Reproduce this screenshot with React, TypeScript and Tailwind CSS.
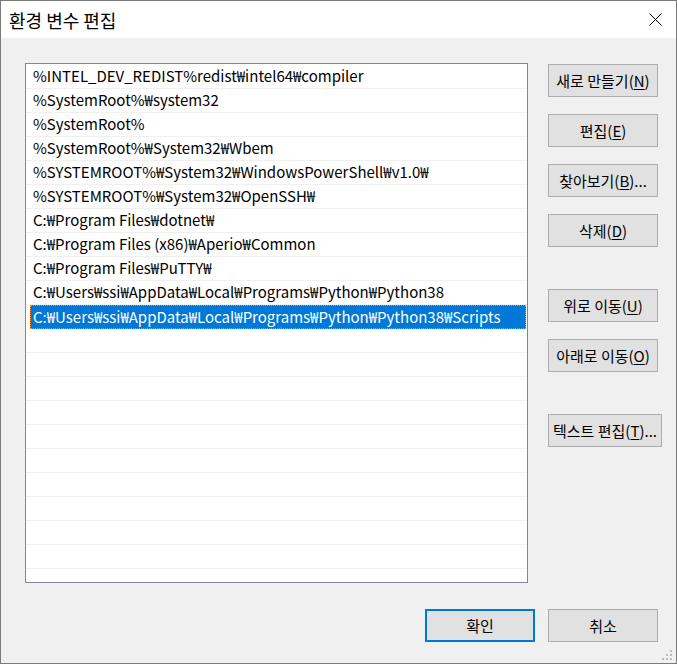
const paths = [
  "%INTEL_DEV_REDIST%redist₩intel64₩compiler",
  "%SystemRoot%₩system32",
  "%SystemRoot%",
  "%SystemRoot%₩System32₩Wbem",
  "%SYSTEMROOT%₩System32₩WindowsPowerShell₩v1.0₩",
  "%SYSTEMROOT%₩System32₩OpenSSH₩",
  "C:₩Program Files₩dotnet₩",
  "C:₩Program Files (x86)₩Aperio₩Common",
  "C:₩Program Files₩PuTTY₩",
  "C:₩Users₩ssi₩AppData₩Local₩Programs₩Python₩Python38",
  "C:₩Users₩ssi₩AppData₩Local₩Programs₩Python₩Python38₩Scripts",
];

const SELECTED = 10;

function WinButton({
  label,
  hotkey,
  suffix = "",
  wide = false,
  className = "",
}: {
  label: string;
  hotkey: string;
  suffix?: string;
  wide?: boolean;
  className?: string;
}) {
  return (
    <button
      className={`h-[33px] shrink-0 ${wide ? "w-[114px]" : "w-[110px]"} border border-[#adadad] bg-[#e1e1e1] text-[15px] leading-none text-black flex items-center justify-center ${className}`}
    >
      <span>
        {label}(<u className="underline-offset-2">{hotkey}</u>){suffix}
      </span>
    </button>
  );
}

export default function App() {
  const rows = Array.from({ length: 22 }, (_, i) => paths[i] ?? "");

  return (
    <div className="relative w-[677px] h-[664px] flex flex-col border border-[#7a7a7a] bg-[#f0f0f0] text-black font-['Noto_Sans_CJK_KR','Noto_Sans',sans-serif]">
      {/* title bar */}
      <div className="h-[37px] shrink-0 bg-white flex items-center justify-between pl-[8px] pr-[14px]">
        <span className="text-[18px] leading-none">환경 변수 편집</span>
        <svg width="13" height="13" viewBox="0 0 13 13" className="shrink-0">
          <path d="M0.5 0.5 L12.5 12.5 M12.5 0.5 L0.5 12.5" stroke="#000" strokeWidth="1" fill="none" />
        </svg>
      </div>

      <div className="flex-1 flex flex-col pt-[25px] pl-[24px] pr-[18px]">
        <div className="flex gap-[20px]">
          {/* list */}
          <div className="w-[503px] h-[520px] shrink-0 border border-[#828790] bg-white pt-[1px] overflow-hidden">
            {rows.map((p, i) =>
              i === SELECTED ? (
                <div key={i} className="h-[24px] pl-[4px] pr-[1px]">
                  <div className="h-full flex items-center pl-[2px] bg-[#0078d7] border border-dotted border-[#ff8728] text-white text-[15px] whitespace-nowrap">
                    {p}
                  </div>
                </div>
              ) : (
                <div
                  key={i}
                  className="h-[24px] flex items-center pl-[7px] border-b border-[#f0f0f0] text-[15px] whitespace-nowrap"
                >
                  {p}
                </div>
              )
            )}
          </div>

          {/* side buttons */}
          <div className="w-[110px] shrink-0 flex flex-col items-start gap-[17px] pt-[1px]">
            <WinButton label="새로 만들기" hotkey="N" />
            <WinButton label="편집" hotkey="E" />
            <WinButton label="찾아보기" hotkey="B" suffix="..." />
            <WinButton label="삭제" hotkey="D" />
            <WinButton label="위로 이동" hotkey="U" className="mt-[25px]" />
            <WinButton label="아래로 이동" hotkey="O" />
            <WinButton label="텍스트 편집" hotkey="T" suffix="..." wide className="mt-[25px]" />
          </div>
        </div>

        {/* footer */}
        <div className="flex justify-end gap-[13px] mt-[26px]">
          <button className="h-[33px] w-[110px] border-2 border-[#0078d7] bg-[#e1e1e1] text-[15px] leading-none">
            확인
          </button>
          <button className="h-[33px] w-[110px] border border-[#adadad] bg-[#e1e1e1] text-[15px] leading-none">
            취소
          </button>
        </div>
      </div>

      {/* size grip */}
      <svg className="absolute right-[4px] bottom-[3px]" width="10" height="10" viewBox="0 0 10 10">
        <g fill="#bcbcbc">
          <rect x="8" y="0" width="2" height="2" />
          <rect x="4" y="4" width="2" height="2" />
          <rect x="8" y="4" width="2" height="2" />
          <rect x="0" y="8" width="2" height="2" />
          <rect x="4" y="8" width="2" height="2" />
          <rect x="8" y="8" width="2" height="2" />
        </g>
      </svg>
    </div>
  );
}
